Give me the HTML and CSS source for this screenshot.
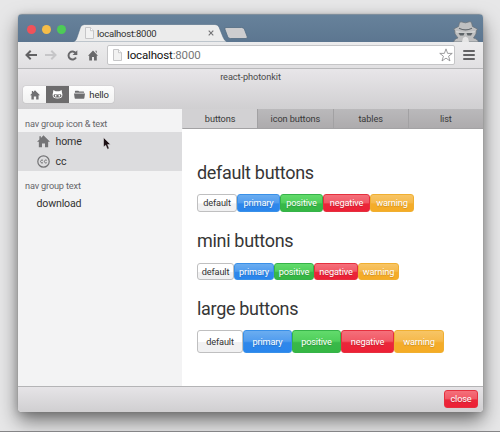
FILE: index.html
```html
<!DOCTYPE html>
<html lang="en">
<head>
<meta charset="utf-8">
<title>react-photonkit</title>
<link rel="stylesheet" href="styles.css">
</head>
<body>
<svg class="defs" width="0" height="0">
  <symbol id="home" viewBox="0 0 12 12"><path d="M6 .3 12 6.3H10.3V11.3H7.4V7.8H4.6V11.3H1.7V6.3H0L2.2 4.1V1.2H3.6V2.7Z"/></symbol>
  <symbol id="page" viewBox="0 0 9 12"><path d="M.5.5H5.5L8.5 3.7V11.5H.5Z" fill="#f2f2f2" stroke="#c6c6c8"/><path d="M5.5.5V3.7H8.5" fill="#fff" stroke="#bcbcbe" stroke-width=".8"/></symbol>
</svg>
<div class="window">
  <header class="titlebar">
    <div class="lights"><i class="red"></i><i class="yellow"></i><i class="green"></i></div>
    <div class="tab">
      <svg class="tab-shape" viewBox="0 0 154 18"><path d="M0 18C3 17 3.500 15 4.500 12L7.500 3Q8.500 .5 11.500 .5H142Q145 .5 146 3L150 13Q151.500 17 154 18Z" fill="#ececec" stroke="#506b85" stroke-width=".6"/></svg>
      <svg class="tab-page"><use href="#page"/></svg>
      <span>localhost:8000</span>
      <svg class="tab-close" viewBox="0 0 6 6"><path d="M.7.7 5.300 5.300M5.300.7.7 5.300" stroke="#737375" stroke-width="1.1"/></svg>
    </div>
    <svg class="newtab" viewBox="0 0 24 12"><path d="M2 .5H17.500Q19.500.5 20.300 2L23.300 10Q23.500 11.500 22 11.500H6.500Q4.500 11.500 3.800 10L.8 2Q.5.5 2 .5Z" fill="#cdcdcf" stroke="#526b81" stroke-width=".8"/></svg>
    <svg class="spy" viewBox="0 0 28 21"><path d="M1.500 21C2.500 18 5 17 6 17L3 13 2.500 9 1.500 8 6.500 5.500 7.500 1.500 9 .8 13.500 1.800 18 .6 19.500 1.500 20.500 5.500 25.500 8 24.500 9.500 24 13 21.500 17C24 17.500 26 19 26.500 21Z" fill="#bfc0c1" stroke="#6a747c" stroke-width=".8"/><path d="M7 7.300Q13.500 10.500 20 7.300" fill="none" stroke="#666c71" stroke-width="1.100"/><path d="M4 10Q13.500 12 23 10L22.500 11.500 4.500 11.500Z" fill="#dadbdb"/><path d="M6.500 12H12.500L11.500 14.500H8ZM14.500 12H20.500L19 14.500H15.500Z" fill="#5e6468"/><path d="M11 17 13.500 15.500 16 17 17 21H10Z" fill="#e6e6e6"/></svg>
  </header>
  <div class="toolbar">
    <svg class="back" viewBox="0 0 12 10"><path d="M12 5H1.500M5.700.8 1.500 5 5.700 9.200" fill="none" stroke="#626264" stroke-width="2"/></svg>
    <svg class="forward" viewBox="0 0 12 10"><path d="M0 5H10.500M6.300.8 10.500 5 6.300 9.200" fill="none" stroke="#c6c6c8" stroke-width="2"/></svg>
    <svg class="reload" viewBox="0 0 11 11"><path d="M8.800 3.200A4 4 0 1 0 9 7.500" fill="none" stroke="#68686a" stroke-width="2"/><path d="M10.300.3V5H5.600Z" fill="#68686a"/></svg>
    <svg class="go-home" viewBox="0 0 10 11"><path d="M5 .5 10 5.800H8.800V10.500H6V7H4V10.500H1.200V5.800H0ZM7.200.7H8.700V3.500Z" fill="#68686a"/></svg>
    <div class="address"><svg class="url-page"><use href="#page"/></svg><span class="url">localhost<em>:8000</em></span>
      <svg class="star" viewBox="0 0 13 13"><path d="M6.500.8 8 5H12.300L8.900 7.600 10.200 12 6.500 9.400 2.800 12 4.100 7.600.7 5H5Z" fill="#fff" stroke="#8d8d8f" stroke-width=".8"/></svg></div>
    <div class="menu"><i></i><i></i><i></i></div>
  </div>
  <div class="app-header">
    <h1>react-photonkit</h1>
    <div class="group">
      <button><svg class="gicon"><use href="#home"/></svg></button>
      <button class="active"><svg class="cat" viewBox="0 0 12 10"><path fill-rule="evenodd" d="M1.400 0 4 1.300H8L10.600 0 11 3Q13 9.500 6 9.500T1 3ZM3.400 4.600C.8 4.600 1 8 3.500 8.200H8.500C11 8 11.200 4.600 8.600 4.600L6 5Z" fill="#fff"/><ellipse cx="4" cy="6.400" rx=".9" ry="1.200" fill="#fff"/><ellipse cx="8" cy="6.400" rx=".9" ry="1.200" fill="#fff"/></svg></button>
      <button class="hello"><svg class="folder" viewBox="0 0 12 9"><path d="M1 2V.9Q1 .3 1.600.3H4.700L5.700 1.300H10.400Q11 1.300 11 2V2.600H1ZM0 3.400H12L11.300 8.400Q11.200 9 10.600 9H1.400Q.8 9 .7 8.400Z" fill="#6e6e70"/></svg><span>hello</span></button>
    </div>
  </div>
  <main class="content">
    <nav class="sidebar">
      <h5>nav group icon &amp; text</h5>
      <a class="on"><svg class="nav-icon"><use href="#home"/></svg><span>home</span></a>
      <a class="on"><svg class="nav-icon" viewBox="0 0 13 13"><circle cx="6.500" cy="6.500" r="5.700" fill="none" stroke="#737375" stroke-width="1.200"/><path d="M6 5.300A1.500 1.500 0 1 0 6 7.700M9.800 5.300A1.500 1.500 0 1 0 9.800 7.700" fill="none" stroke="#737375" stroke-width="1"/></svg><span>cc</span></a>
      <h5 class="second">nav group text</h5>
      <a><span>download</span></a>
      <svg class="cursor" viewBox="0 0 8 13"><path d="M.5.500V10L2.700 8.200 4.400 12.200 6.200 11.400 4.600 7.600H7.600Z" fill="#1d1015" stroke="#eee" stroke-width=".5"/></svg>
    </nav>
    <section class="pane">
      <div class="tabs"><div class="current">buttons</div><div>icon buttons</div><div>tables</div><div>list</div></div>
      <div class="examples">
        <h2 class="h-default">default buttons</h2>
        <div class="row default"><button class="btn plain">default</button><button class="btn primary">primary</button><button class="btn positive">positive</button><button class="btn negative">negative</button><button class="btn warning">warning</button></div>
        <h2 class="h-mini">mini buttons</h2>
        <div class="row mini"><button class="btn plain">default</button><button class="btn primary">primary</button><button class="btn positive">positive</button><button class="btn negative">negative</button><button class="btn warning">warning</button></div>
        <h2 class="h-large">large buttons</h2>
        <div class="row large"><button class="btn plain">default</button><button class="btn primary">primary</button><button class="btn positive">positive</button><button class="btn negative">negative</button><button class="btn warning">warning</button></div>
      </div>
    </section>
  </main>
  <footer><button class="btn negative close">close</button></footer>
</div>
</body>
</html>
```
FILE: styles.css
```css
* { box-sizing: border-box; }
body {
  margin: 0; width: 500px; height: 432px; overflow: hidden;
  padding: 14px 0 0 18px; background: #e7e7e8;
  border-bottom: 1px solid #858587;
  font-family: Roboto, sans-serif; color: #333;
}
svg { display: block; flex: none; }
.defs { position: absolute; }
h1, h2, h5 { margin: 0; font-weight: 400; }
button { font-family: inherit; margin: 0; padding: 0; border: 0; }
.window {
  width: 465px; height: 398px; border-radius: 4px; overflow: hidden;
  display: flex; flex-direction: column; background: #fff;
  box-shadow: 0 0 1px #777, 0 9px 19px rgba(0,0,0,.5), 0 2px 8px rgba(0,0,0,.15);
}
.titlebar {
  height: 28px; flex: none; display: flex; align-items: flex-end;
  background: linear-gradient(#67829b, #5c7690); border-top: 1px solid #7f8f9d;
}
.lights { display: flex; gap: 6px; padding: 0 0 8px 9px; width: 55px; }
.lights i { width: 9px; height: 9px; border-radius: 50%; flex: none; }
.red { background: #f0525a; }
.yellow { background: #f5bd48; }
.green { background: #4dcb57; }
.tab {
  width: 154px; height: 18px; position: relative; display: flex; align-items: center;
  padding-left: 12px; font-size: 9.5px; letter-spacing: -.22px; color: #303030;
}
.tab-shape { position: absolute; inset: 0; width: 154px; height: 18px; }
.tab-page { width: 9px; height: 12px; position: relative; }
.tab span { position: relative; width: 114px; padding-left: 3px; }
.tab-close { width: 6px; height: 6px; position: relative; }
.newtab { width: 24px; height: 12px; margin: 0 0 3px -3px; }
.spy { width: 28px; height: 21px; margin-left: auto; margin-right: 3px; }
.toolbar {
  height: 27px; flex: none; display: flex; align-items: center;
  background: linear-gradient(#ececed, #e1e0e2); border-bottom: 1px solid #b9b9bb;
  padding-left: 7px;
}
.back, .forward { width: 12px; height: 10px; margin-right: 8px; }
.forward { margin-right: 10px; }
.reload { width: 11px; height: 11px; margin-right: 10px; }
.go-home { width: 10px; height: 11px; margin-right: 9px; }
.address {
  width: 98px; flex: 1; height: 20px; border: 1px solid #c5c5c7; border-radius: 2px;
  background: #fff; display: flex; align-items: center; padding: 0 1px 0 5px;
}
.url-page { width: 9px; height: 12px; }
.url { flex: 1; padding-left: 5px; font-size: 11.5px; letter-spacing: -.15px; color: #111; }
.url em { font-style: normal; color: #777; }
.star { width: 14px; height: 14px; }
.menu { width: 28px; padding-left: 8px; display: flex; flex-direction: column; gap: 2px; }
.menu i { width: 12px; height: 2px; background: #626264; border-radius: 1px; }
.app-header { height: 40px; flex: none; background: linear-gradient(#e8e6e9, #d0cfd1); }
h1 { font-size: 9.2px; line-height: 11px; padding-top: 2px; height: 17px; text-align: center; letter-spacing: -.08px; color: #4b4b4b; }
.group { display: flex; width: 91px; height: 17px; margin-left: 5px; border-radius: 3px; overflow: hidden; box-shadow: 0 0 1px #888; }
.group button { width: 23px; background: linear-gradient(#fdfdfd, #f1f1f1); display: flex; align-items: center; justify-content: center; }
.group .active { background: #6d6c6d; }
.group .hello { width: 45px; font-size: 9.5px; letter-spacing: -.2px; gap: 4px; color: #303030; }
.gicon { width: 10px; height: 10px; fill: #707072; }
.cat { width: 11px; height: 9px; }
.folder { width: 11px; height: 9px; }
.content { flex: 1; min-height: 0; display: flex; }
.sidebar { width: 164px; background: #f3f3f4; padding-top: 9px; position: relative; }
h5 { font-size: 9.2px; line-height: 12px; height: 14px; padding-left: 7px; letter-spacing: -.17px; color: #66666a; }
.sidebar a { display: flex; align-items: center; height: 19px; padding-left: 18.5px; font-size: 10.6px; letter-spacing: -.16px; color: #333; }
.sidebar .on { background: #dcdcde; height: 19.5px; }
.nav-icon { width: 13px; height: 13px; margin-right: 6px; fill: #747476; }
.second { margin-top: 9px; }
.cursor { width: 8px; height: 13px; position: absolute; left: 85px; top: 28px; }
.pane { width: 301px; }
.tabs { display: flex; height: 20px; }
.tabs div {
  flex: 1; border-left: 1px solid #a2a1a3; border-bottom: 1px solid #a3a2a4;
  background: linear-gradient(#bab9bb, #adabad); text-align: center;
  font-size: 9.2px; line-height: 19px; letter-spacing: -.1px; color: #393939;
}
.tabs .current { background: #d2d1d3; border-left-color: #d2d1d3; }
.examples { padding: 33px 0 0 15px; }
h2 { font-size: 18px; line-height: 22px; height: 32px; letter-spacing: -.32px; color: #363636; }
.row { display: flex; }
.btn {
  height: 18px; font-size: 9.2px; line-height: 16px; letter-spacing: -.15px; text-align: center; white-space: nowrap;
  border-radius: 3px; border: 1px solid; color: #fff; text-shadow: 0 1px 1px rgba(0,0,0,.16);
}
.plain { color: #333; border-color: #bfbfc0; background: linear-gradient(#fff 50%, #f1f1f2 55%); text-shadow: none; width: 40px; }
.primary { width: 43px; border-color: #3990e8; background: linear-gradient(#6badf0, #509cef 48%, #2f87ea 56%, #2a86ed); }
.positive { width: 43px; border-color: #36b349; background: linear-gradient(#62db6c, #50cf5b 48%, #39b849 56%, #35b744); }
.negative { width: 47px; border-color: #e5303e; background: linear-gradient(#f4707b, #f25865 48%, #ea273a 56%, #ed2036); }
.warning { width: 44px; border-color: #f0af31; background: linear-gradient(#f7c566, #f6b94b 48%, #f4ac2b 56%, #f5ac25); }
.h-mini { margin-top: 18px; height: 33px; }
.mini .btn { height: 17px; line-height: 15px; }
.mini .plain { width: 37px; }
.mini .primary { width: 40px; }
.mini .positive { width: 40px; }
.mini .negative { width: 44px; }
.mini .warning { width: 41px; }
.h-large { margin-top: 18px; height: 32px; }
.large .btn { height: 23px; line-height: 21px; }
.large .plain { width: 46px; }
.large .primary { width: 49px; }
.large .positive { width: 49px; }
.large .negative { width: 53px; }
.large .warning { width: 50px; }
footer {
  height: 26px; flex: none; padding: 3px 5px 0; display: flex; justify-content: flex-end;
  border-top: 1px solid #b4b4b6; background: linear-gradient(#e6e4e7, #d0cfd1);
}
.close { width: 34px; height: 18px; }
```
